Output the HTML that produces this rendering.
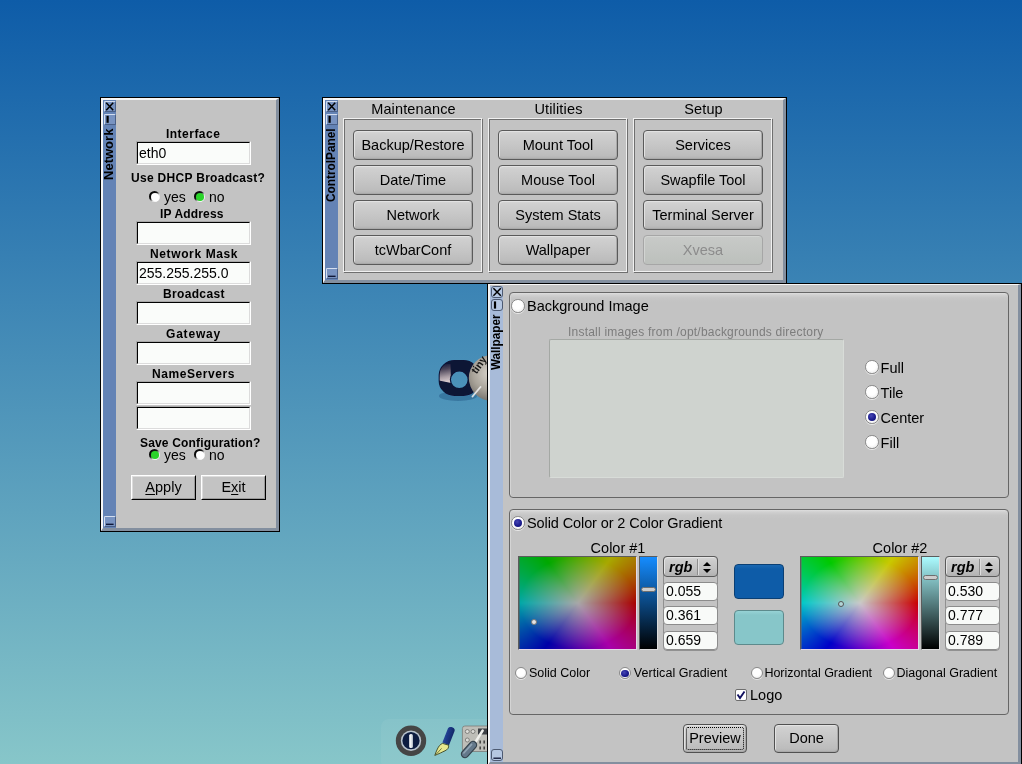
<!DOCTYPE html>
<html lang="en">
<head>
<meta charset="utf-8">
<title>Tiny Core Desktop</title>
<style>
*{box-sizing:border-box;margin:0;padding:0}
html,body{width:1022px;height:764px;overflow:hidden}
body{position:relative;font-family:"Liberation Sans",sans-serif;font-size:14px;color:#000;
 background:linear-gradient(to bottom,#0e5ca8 0%,#87c6c9 100%)}
.abs,.win,.win *{position:absolute}
.win{background:#c3c3c3;will-change:transform}
.win .hl{left:0;top:0;right:0;bottom:0;border:1px solid #000}
.win .hl::after{content:"";position:absolute;left:0;top:0;right:0;bottom:0;border-left:2px solid #f6f6f6;border-top:2px solid #f6f6f6;border-right:3px solid #838f9f;border-bottom:3px solid #838f9f}
.win .hl::before{content:"";position:absolute;left:1px;top:1px;right:2px;bottom:2px;border-right:1px solid #727d8b;border-bottom:1px solid #727d8b}
.tbar{left:3px;top:3px;width:13px;bottom:4px;background:#6483b5}
.tbtn{left:1px;width:12px;height:11px;border:1px solid #d4deef;border-right-color:#4a6088;border-bottom-color:#4a6088;border-radius:1.5px;background:#7893c1}
.tbtn svg{left:0;top:0}
.ttl{left:-1px;transform-origin:0 0;transform:rotate(-90deg);font-weight:bold;font-size:12px;white-space:nowrap;line-height:14px;height:14px;color:#000}
.lb{font-weight:bold;font-size:12px;line-height:14px;white-space:nowrap}
.in{background:#fafcfa;border-top:1px solid #a8a8a8;border-left:1px solid #a8a8a8;border-right:1px solid #fff;border-bottom:1px solid #fff;font-size:14px;line-height:20px;white-space:nowrap;overflow:hidden}
.in::before{content:"";position:absolute;left:0;top:0;right:0;bottom:0;border-top:1px solid #000;border-left:1px solid #000;border-right:1px solid #dcdcdc;border-bottom:1px solid #dcdcdc}
.in span{left:2px;top:1px}
.t14{font-size:14px;line-height:16px;white-space:nowrap}
.rd{width:11px;height:11px;border-radius:50%;background:linear-gradient(135deg,#000 0%,#111 42%,#ddd 62%,#fff 80%)}
.rd::before{content:"";position:absolute;left:1.5px;top:1.5px;width:8px;height:8px;border-radius:50%;background:#fff}
.rd.on::before{background:#2bd42b;left:2px;top:2px;width:7.5px;height:7.5px}
.btn1{background:#c3c3c3;border:1px solid;border-color:#fff #000 #000 #fff;font-size:14.5px;line-height:23px;text-align:center;white-space:nowrap}
.btn1::before{content:"";position:absolute;left:0;top:0;right:0;bottom:0;border:1px solid;border-color:#dcdcdc #9a9a9a #9a9a9a #dcdcdc}
.win u{position:static;text-decoration:underline;text-underline-offset:2px}
.grp{border:1px solid #6f6f6f}
.grp::before{content:"";position:absolute;left:-2px;top:-2px;width:100%;height:100%;box-sizing:content-box;border:1px solid #f0f0f0}
.hd{font-size:14.5px;line-height:16px;white-space:nowrap;text-align:center;letter-spacing:0.15px}
.gb{border:1px solid #5a5a5a;border-radius:4px;background:linear-gradient(to bottom,#d6d6d6 0%,#cfcfcf 12%,#c6c6c6 50%,#bcbcbc 88%,#b0b0b0 100%);font-size:14.5px;line-height:28px;text-align:center;white-space:nowrap;box-shadow:inset 1px 1px 0 #e2e2e2,inset -1px -1px 0 #a9a9a9}
.gb.dis{color:#8c8c8c;border-color:#a6a6a6;background:linear-gradient(to bottom,#c8cac8,#bcc0bc);box-shadow:inset 1px 1px 0 #d2d4d2}
.tbar.act{background:#a8bbd9}
#wp .hl::after{border-top-width:1px}
.tbtn.act{left:0.5px;border:1px solid #4d5a72;border-radius:3px;background:#b5c7e2;width:12.4px;height:12px}
.rgrp{border:1px solid #666;border-radius:4px;background:linear-gradient(to bottom,#dedede 0,#d0d0d0 2px,#c6c6c6 5px,#c3c3c3 9px);box-shadow:inset 1px 0 0 #d4d4d4}
.r13{width:13.4px;height:13.4px;border-radius:50%;border:1px solid #8a8a8a;background:radial-gradient(circle at 45% 40%,#fff 0,#fff 45%,#e2e2e2 100%);box-shadow:0 1px 0 #e6e6e6}
.r13.on::after,.r12.on::after{content:"";position:absolute;left:50%;top:50%;width:8.2px;height:8.2px;margin:-4.1px 0 0 -4.1px;border-radius:50%;background:radial-gradient(circle at 40% 35%,#4646b4 0,#1c1c8e 55%,#101070 100%)}
.r12{width:12px;height:12px;border-radius:50%;border:1px solid #8a8a8a;background:radial-gradient(circle at 45% 40%,#fff 0,#fff 45%,#e2e2e2 100%);box-shadow:0 1px 0 #e6e6e6}
.r12.on::after{width:7.4px;height:7.4px;margin:-3.7px 0 0 -3.7px}
.t145{font-size:14.5px;line-height:16px;white-space:nowrap}
.t125{font-size:12.5px;line-height:14px;white-space:nowrap}
.hint{font-size:12px;line-height:14px;white-space:nowrap;color:#7c7c7c;letter-spacing:0.22px}
.pvw{background:#cfd3cf;border:1px solid #a4a8a4;border-right-color:#d8dcd8;border-bottom-color:#d8dcd8;border-radius:2px}
.hue{border:1px solid;border-color:#5c5c5c #e4d8e8 #e4d8e8 #5c5c5c;overflow:hidden;background:#888}
.hue .cone{left:50%;top:50%;width:200px;height:200px;margin:-100px 0 0 -100px;background:radial-gradient(circle closest-side,#fff 0%,rgba(255,255,255,0) 100%),conic-gradient(from 0deg,#80ff00 0deg,#ffff00 30deg,#ff0000 90deg,#ff00ff 150deg,#0000ff 210deg,#00ffff 270deg,#00ff00 330deg,#80ff00 360deg)}
.hue .dim{left:0;top:0;right:0;bottom:0;background:#000}
.mk{width:6px;height:6px;border-radius:50%;border:1px solid #777;background:#e4e4e4}
.vbar{border:1px solid;border-color:#5c5c5c #dcdcdc #dcdcdc #5c5c5c}
.knob{left:1px;right:1px;height:5px;border:1px solid #6e6e6e;border-radius:2.5px;background:#cdcdcd}
.rin{background:#f8faf8;border:1px solid #8c8c8c;border-radius:4px;font-size:14px;line-height:18px;white-space:nowrap}
.rin span{left:2px;top:-1px}
.cho{border:1px solid #5a5a5a;border-radius:4px;background:linear-gradient(to bottom,#d8d8d8 0%,#cccccc 20%,#c2c2c2 60%,#b2b2b2 100%);box-shadow:inset 1px 1px 0 #e4e4e4}
.cho b{font-style:italic;font-weight:bold;font-size:14.5px;line-height:16px;left:5px;top:2px}
.cho i{left:33px;top:2px;width:1px;height:16px;background:#8e8e8e;box-shadow:1px 0 0 #dedede}
.sw{border:1px solid;border-radius:4px}
.cb{width:12px;height:12px;background:#fff;border:1px solid #6e6e6e;border-radius:2px}
.gb2{border:1px solid #505050;border-radius:4px;background:linear-gradient(to bottom,#d6d6d6 0%,#cfcfcf 12%,#c6c6c6 50%,#bcbcbc 88%,#b0b0b0 100%);font-size:14.5px;text-align:center;white-space:nowrap;box-shadow:inset 1px 1px 0 #e2e2e2,inset -1px -1px 0 #a9a9a9}
</style>
</head>
<body>

<!-- ================= Desktop: logo + wbar icons ================= -->
<svg class="abs" style="left:425px;top:345px" width="80" height="70" viewBox="425 345 80 70">
 <defs>
  <radialGradient id="sph" cx="0.45" cy="0.4" r="0.65"><stop offset="0" stop-color="#d6d2ca"/><stop offset="0.55" stop-color="#aaa49a"/><stop offset="1" stop-color="#6e6a64"/></radialGradient>
  <linearGradient id="shine" x1="0" y1="0" x2="0.15" y2="1"><stop offset="0" stop-color="#0b1234"/><stop offset="0.35" stop-color="#4a4458"/><stop offset="0.75" stop-color="#a89ca4"/><stop offset="1" stop-color="#d4c8cc"/></linearGradient>
  <filter id="soft" x="-20%" y="-20%" width="140%" height="140%"><feGaussianBlur stdDeviation="0.7"/></filter>
 </defs>
 <g filter="url(#soft)">
  <ellipse cx="458" cy="396" rx="19" ry="5" fill="#12305c" opacity="0.28"/>
  <path d="M454.700 360 L463.300 360 A16 15 0 0 1 479.300 375 L479.300 381 A16 15 0 0 1 463.300 396 L454.700 396 A16 15 0 0 1 438.700 381 L438.700 375 A16 15 0 0 1 454.700 360 Z M459.300 371.500 A8.300 8.300 0 1 1 459.300 388.100 A8.300 8.300 0 1 1 459.300 371.500 Z" fill="#0b1234" fill-rule="evenodd"/>
  <clipPath id="ringclip"><path d="M454.700 361 L463.300 361 A15 14 0 0 1 478.300 375 L478.300 381 A15 14 0 0 1 463.300 395 L454.700 395 A15 14 0 0 1 439.700 381 L439.700 375 A15 14 0 0 1 454.700 361 Z M459.300 370.300 A9.500 9.500 0 1 1 459.300 389.300 A9.500 9.500 0 1 1 459.300 370.300 Z" clip-rule="evenodd"/></clipPath>
  <path d="M436 364 L450.500 364 L451 383 L436 380 Z" fill="url(#shine)" clip-path="url(#ringclip)"/>
  <circle cx="491.800" cy="378" r="23" fill="url(#sph)"/>
  <path d="M472.500 396.500 L480.500 387" stroke="#f2f2f2" stroke-width="1.800" stroke-linecap="round" opacity="0.85"/>
  <text x="0" y="0" transform="translate(476.500 374.500) rotate(-55)" font-family="Liberation Sans, sans-serif" font-weight="bold" font-size="10.500" fill="#161616">tiny</text>
 </g>
</svg>
<div class="abs" style="left:381px;top:719px;width:130px;height:50px;border-radius:8px;background:rgba(255,255,255,0.05)"></div>
<svg class="abs" style="left:388px;top:716px" width="102" height="48" viewBox="388 716 102 48">
 <defs>
  <linearGradient id="bar" x1="0" y1="0" x2="1" y2="0"><stop offset="0" stop-color="#ffffff"/><stop offset="0.5" stop-color="#e8ecf0"/><stop offset="1" stop-color="#a8b0bc"/></linearGradient>
  <linearGradient id="pen" x1="0" y1="0" x2="1" y2="0.4"><stop offset="0" stop-color="#3a5cb0"/><stop offset="0.5" stop-color="#1e3a8a"/><stop offset="1" stop-color="#122460"/></linearGradient>
  <filter id="soft2" x="-10%" y="-10%" width="120%" height="120%"><feGaussianBlur stdDeviation="0.45"/></filter>
 </defs>
 <g filter="url(#soft2)">
  <circle cx="411" cy="740.700" r="15.200" fill="#444444"/>
  <circle cx="411" cy="740.700" r="10.200" fill="#b8c2cc"/>
  <circle cx="411" cy="740.700" r="8.600" fill="#0c1c40"/>
  <rect x="409.200" y="734" width="3.800" height="14" rx="1.600" fill="url(#bar)"/>
  <path d="M447.800 728.800 C448.800 725.400 455.800 727.200 454.600 731 L449 745.200 L442.400 742.600 Z" fill="url(#pen)"/>
  <path d="M442.600 743.400 L448.600 745.200 C449.200 747.600 447.400 749.800 445 750.800 C442 752.200 439 753.800 434.800 755.400 C435.600 753 436.400 751 437.400 749 C438.600 746.400 440.200 744.200 442.600 743.400 Z" fill="#e6e88e" stroke="#3c4420" stroke-width="0.900"/>
  <path d="M436 754.400 L441.600 748.400" stroke="#3c4420" stroke-width="0.700" fill="none"/>
  <rect x="462.400" y="726" width="40" height="25.500" rx="2.500" fill="#bebeb8" stroke="#7c7c78" stroke-width="0.800"/>
  <rect x="478" y="728.500" width="12" height="6" fill="#3c4044"/>
  <g fill="#dcdcd8" stroke="#70706c" stroke-width="0.800"><circle cx="467.300" cy="731.500" r="2"/><circle cx="473" cy="731.500" r="2"/><circle cx="467.300" cy="740" r="2"/></g>
  <g fill="#2a2a2a"><rect x="479.500" y="740.500" width="1.300" height="3"/><rect x="483.500" y="740.500" width="1.300" height="3"/><rect x="479.500" y="746.500" width="1.300" height="3"/><rect x="483.500" y="746.500" width="1.300" height="3"/></g>
  <path d="M482.600 730.600 L473.400 745.400" stroke="#f0f0ec" stroke-width="2.600" stroke-linecap="round" fill="none"/>
  <path d="M473 745 L465 754" stroke="#34424c" stroke-width="8.400" stroke-linecap="round" fill="none"/>
  <path d="M473 745 L465 754" stroke="#64788a" stroke-width="6" stroke-linecap="round" fill="none"/>
  <path d="M471.600 744.400 L463.800 753" stroke="#90a4b4" stroke-width="1.600" stroke-linecap="round" fill="none"/>
 </g>
</svg>

<!-- ================= Network window ================= -->
<div class="win" id="net" style="left:100px;top:97px;width:180px;height:435px">
 <div class="hl"></div>
 <div class="tbar">
  <div class="tbtn" style="top:1px"><svg width="10" height="9" viewBox="0 0 10 9"><path d="M1.2 0.8 L8.2 8.2 M8.2 0.8 L1.2 8.2" stroke="#000" stroke-width="1.5" fill="none"/></svg></div>
  <div class="tbtn" style="top:14px"><svg width="10" height="9" viewBox="0 0 10 9"><path d="M2.6 0.8 L2.6 7.8" stroke="#000" stroke-width="2.2" fill="none"/></svg></div>
  <div class="ttl" style="top:80px;transform:rotate(-90deg) scaleX(1.085)">Network</div>
  <div class="tbtn" style="bottom:1px"><svg width="10" height="9" viewBox="0 0 10 9"><path d="M1 7.3 L8.6 7.3" stroke="#0a1030" stroke-width="1.3" fill="none"/></svg></div>
 </div>
 <div class="lb" style="left:66px;top:30px;letter-spacing:0.475px">Interface</div>
 <div class="lb" style="left:31px;top:74px;letter-spacing:0.3px">Use DHCP Broadcast?</div>
 <div class="lb" style="left:60px;top:110px;letter-spacing:0.155px">IP Address</div>
 <div class="lb" style="left:50px;top:150px;letter-spacing:0.62px">Network Mask</div>
 <div class="lb" style="left:63px;top:190px;letter-spacing:0.34px">Broadcast</div>
 <div class="lb" style="left:66px;top:230px;letter-spacing:0.8px">Gateway</div>
 <div class="lb" style="left:52px;top:270px;letter-spacing:0.57px">NameServers</div>
 <div class="lb" style="left:40px;top:339px;letter-spacing:0.17px">Save Configuration?</div>
 <div class="in" style="left:36px;top:44px;width:115px;height:24px"><span>eth0</span></div>
 <div class="in" style="left:36px;top:124px;width:115px;height:24px"></div>
 <div class="in" style="left:36px;top:164px;width:115px;height:24px"><span>255.255.255.0</span></div>
 <div class="in" style="left:36px;top:204px;width:115px;height:24px"></div>
 <div class="in" style="left:36px;top:244px;width:115px;height:24px"></div>
 <div class="in" style="left:36px;top:284px;width:115px;height:24px"></div>
 <div class="in" style="left:36px;top:309px;width:115px;height:24px"></div>
 <div class="rd" style="left:49px;top:94px"></div><div class="t14" style="left:64px;top:92px">yes</div>
 <div class="rd on" style="left:94px;top:94px"></div><div class="t14" style="left:109px;top:92px">no</div>
 <div class="rd on" style="left:49px;top:352px"></div><div class="t14" style="left:64px;top:350px">yes</div>
 <div class="rd" style="left:94px;top:352px"></div><div class="t14" style="left:109px;top:350px">no</div>
 <div class="btn1" style="left:31px;top:378px;width:65px;height:25px"><u>A</u>pply</div>
 <div class="btn1" style="left:101px;top:378px;width:65px;height:25px">E<u>x</u>it</div>
</div>

<!-- ================= ControlPanel window ================= -->
<div class="win" id="cp" style="left:322px;top:97px;width:465px;height:187px">
 <div class="hl"></div>
 <div class="tbar">
  <div class="tbtn" style="top:1px"><svg width="10" height="9" viewBox="0 0 10 9"><path d="M1.2 0.8 L8.2 8.2 M8.2 0.8 L1.2 8.2" stroke="#000" stroke-width="1.5" fill="none"/></svg></div>
  <div class="tbtn" style="top:14px"><svg width="10" height="9" viewBox="0 0 10 9"><path d="M2.6 0.8 L2.6 7.8" stroke="#000" stroke-width="2.2" fill="none"/></svg></div>
  <div class="ttl" style="top:102px;transform:rotate(-90deg) scaleX(0.985)">ControlPanel</div>
  <div class="tbtn" style="bottom:1px"><svg width="10" height="9" viewBox="0 0 10 9"><path d="M1 7.3 L8.6 7.3" stroke="#0a1030" stroke-width="1.3" fill="none"/></svg></div>
 </div>
 <div class="hd" style="left:22px;width:139px;top:4px">Maintenance</div>
 <div class="grp" style="left:22px;top:22px;width:139px;height:154px"></div>
 <div class="gb" style="left:31px;top:33px;width:120px;height:30px">Backup/Restore</div>
 <div class="gb" style="left:31px;top:68px;width:120px;height:30px">Date/Time</div>
 <div class="gb" style="left:31px;top:103px;width:120px;height:30px">Network</div>
 <div class="gb" style="left:31px;top:138px;width:120px;height:30px">tcWbarConf</div>
 <div class="hd" style="left:167px;width:139px;top:4px">Utilities</div>
 <div class="grp" style="left:167px;top:22px;width:139px;height:154px"></div>
 <div class="gb" style="left:176px;top:33px;width:120px;height:30px">Mount Tool</div>
 <div class="gb" style="left:176px;top:68px;width:120px;height:30px">Mouse Tool</div>
 <div class="gb" style="left:176px;top:103px;width:120px;height:30px">System Stats</div>
 <div class="gb" style="left:176px;top:138px;width:120px;height:30px">Wallpaper</div>
 <div class="hd" style="left:312px;width:139px;top:4px">Setup</div>
 <div class="grp" style="left:312px;top:22px;width:139px;height:154px"></div>
 <div class="gb" style="left:321px;top:33px;width:120px;height:30px">Services</div>
 <div class="gb" style="left:321px;top:68px;width:120px;height:30px">Swapfile Tool</div>
 <div class="gb" style="left:321px;top:103px;width:120px;height:30px">Terminal Server</div>
 <div class="gb dis" style="left:321px;top:138px;width:120px;height:30px">Xvesa</div>
</div>

<!-- ================= Wallpaper window ================= -->
<div class="win" id="wp" style="left:487px;top:283px;width:535px;height:483px">
 <div class="hl"></div>
 <div class="tbar act">
  <div class="tbtn act" style="top:0px"><svg width="10" height="10" viewBox="0 0 10 10"><path d="M1.4 1.2 L8.8 8.8 M8.8 1.2 L1.4 8.8" stroke="#000" stroke-width="1.5" fill="none"/></svg></div>
  <div class="tbtn act" style="top:13px"><svg width="10" height="10" viewBox="0 0 10 10"><path d="M3 1.4 L3 8.6" stroke="#000" stroke-width="2.2" fill="none"/></svg></div>
  <div class="ttl" style="top:84px;transform:rotate(-90deg) scaleX(0.975)">Wallpaper</div>
  <div class="tbtn act" style="bottom:1px"><svg width="10" height="10" viewBox="0 0 10 10"><path d="M1.4 8.2 L9 8.2" stroke="#0a1030" stroke-width="1.3" fill="none"/></svg></div>
 </div>
 <div class="rgrp" style="left:22px;top:9px;width:500px;height:206px"></div>
 <div class="r13" style="left:24.4px;top:16.2px"></div>
 <div class="t145" style="left:40px;top:15px">Background Image</div>
 <div class="hint" style="left:81px;top:42px">Install images from /opt/backgrounds directory</div>
 <div class="pvw" style="left:62px;top:56px;width:295px;height:139px"></div>
 <div class="r13" style="left:378.2px;top:77.4px"></div><div class="t145" style="left:393.6px;top:77px">Full</div>
 <div class="r13" style="left:378.2px;top:102.4px"></div><div class="t145" style="left:393.6px;top:102px">Tile</div>
 <div class="r13 on" style="left:378.2px;top:127.4px"></div><div class="t145" style="left:393.6px;top:127px">Center</div>
 <div class="r13" style="left:378.2px;top:152.4px"></div><div class="t145" style="left:393.6px;top:152px">Fill</div>
 <div class="rgrp" style="left:22px;top:226px;width:500px;height:206px"></div>
 <div class="r13 on" style="left:24.4px;top:233.2px"></div>
 <div class="t145" style="left:40px;top:232px;letter-spacing:-0.1px">Solid Color or 2 Color Gradient</div>
 <div class="t145" style="left:31px;width:200px;top:257px;text-align:center">Color #1</div>
 <div class="hue" style="left:31px;top:273px;width:119px;height:94px"><div class="cone" style="transform:scale(0.585,0.46)"></div><div class="dim" style="opacity:0.341"></div><div class="mk" style="left:12px;top:62px"></div></div>
 <div class="vbar" style="left:152px;top:273px;width:19px;height:94px;background:linear-gradient(to bottom,#158cff,#000)"><div class="knob" style="top:30px"></div></div>
 <div style="left:176px;top:273px;width:55px;height:95px;border:1px solid #909090;border-radius:4px"></div>
 <div class="cho" style="left:176px;top:273px;width:55px;height:21px"><b>rgb</b><i></i><svg style="left:38px;top:4px" width="10" height="13" viewBox="0 0 10 13"><path d="M1 5 L5 1 L9 5 Z M1 8 L5 12 L9 8 Z" fill="#000"/></svg></div>
 <div class="rin" style="left:176px;top:299px;width:55px;height:19px"><span>0.055</span></div>
 <div class="rin" style="left:176px;top:323px;width:55px;height:19px"><span>0.361</span></div>
 <div class="rin" style="left:176px;top:348px;width:55px;height:19px"><span>0.659</span></div>
 <div class="sw" style="left:247px;top:281px;width:50px;height:35px;background:linear-gradient(to bottom,#1a68b2 0,#0e5ca8 4px);border-color:#0a3f74"></div>
 <div class="sw" style="left:247px;top:327px;width:50px;height:35px;background:linear-gradient(to bottom,#97d2d5 0,#87c6c9 4px);border-color:#5d8a8c"></div>
 <div class="t145" style="left:313px;width:200px;top:257px;text-align:center">Color #2</div>
 <div class="hue" style="left:313px;top:273px;width:119px;height:94px"><div class="cone" style="transform:scale(0.585,0.46)"></div><div class="dim" style="opacity:0.211"></div><div class="mk" style="left:37px;top:44px;background:rgba(228,236,236,0.45);border-color:#555"></div></div>
 <div class="vbar" style="left:434px;top:273px;width:19px;height:94px;background:linear-gradient(to bottom,#abfbff,#000)"><div class="knob" style="top:18px"></div></div>
 <div style="left:458px;top:273px;width:55px;height:95px;border:1px solid #909090;border-radius:4px"></div>
 <div class="cho" style="left:458px;top:273px;width:55px;height:21px"><b>rgb</b><i></i><svg style="left:38px;top:4px" width="10" height="13" viewBox="0 0 10 13"><path d="M1 5 L5 1 L9 5 Z M1 8 L5 12 L9 8 Z" fill="#000"/></svg></div>
 <div class="rin" style="left:458px;top:299px;width:55px;height:19px"><span>0.530</span></div>
 <div class="rin" style="left:458px;top:323px;width:55px;height:19px"><span>0.777</span></div>
 <div class="rin" style="left:458px;top:348px;width:55px;height:19px"><span>0.789</span></div>
 <div class="r12" style="left:28.2px;top:384.4px"></div><div class="t125" style="left:42.0px;top:383px">Solid Color</div>
 <div class="r12 on" style="left:132.0px;top:384.4px"></div><div class="t125" style="left:146.8px;top:383px;letter-spacing:0.06px">Vertical Gradient</div>
 <div class="r12" style="left:263.6px;top:384.4px"></div><div class="t125" style="left:277.4px;top:383px">Horizontal Gradient</div>
 <div class="r12" style="left:395.6px;top:384.4px"></div><div class="t125" style="left:409.4px;top:383px">Diagonal Gradient</div>
 <div class="cb" style="left:248px;top:406px"><svg width="10" height="10" viewBox="0 0 10 10"><path d="M1.5 4.5 L4 8 L8.5 1.5" stroke="#101060" stroke-width="1.9" fill="none"/></svg></div>
 <div class="t145" style="left:263px;top:404px">Logo</div>
 <div class="gb2" style="left:196px;top:441px;width:64px;height:29px;line-height:26px">Preview<div style="left:2px;top:2px;right:2px;bottom:2px;border:1px dotted #000;border-radius:2px"></div></div>
 <div class="gb2" style="left:287px;top:441px;width:65px;height:29px;line-height:26px">Done</div>
</div>

</body>
</html>
